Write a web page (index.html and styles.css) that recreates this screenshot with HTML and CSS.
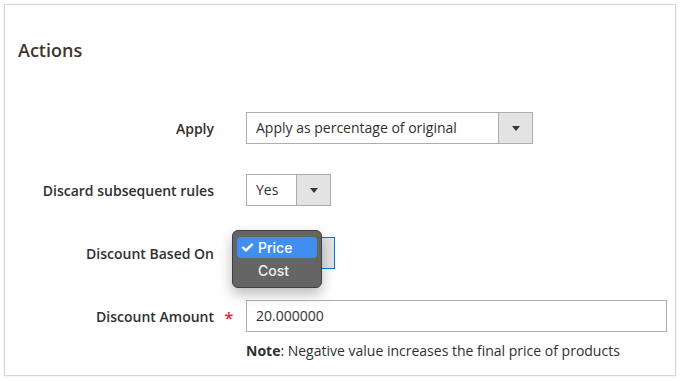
FILE: index.html
```html
<!DOCTYPE html>
<html>
<head>
<meta charset="utf-8">
<link rel="stylesheet" href="styles.css">
</head>
<body>
<div class="panel">
  <h2 class="title">Actions</h2>
  <div class="fields">
    <div class="row">
      <div class="label">Apply</div>
      <div class="mark"></div>
      <div class="control">
        <div class="select select-wide"><span class="value">Apply as percentage of original</span><span class="arrow"><i></i></span></div>
      </div>
    </div>
    <div class="row">
      <div class="label">Discard subsequent rules</div>
      <div class="mark"></div>
      <div class="control">
        <div class="select select-small"><span class="value">Yes</span><span class="arrow"><i></i></span></div>
      </div>
    </div>
    <div class="row">
      <div class="label">Discount Based On</div>
      <div class="mark"></div>
      <div class="control">
        <div class="select select-price focused"><span class="value">Price</span><span class="arrow"><i></i></span></div>
        <div class="popup">
          <div class="opt opt-active"><span class="check">✓</span><span>Price</span></div>
          <div class="opt"><span>Cost</span></div>
        </div>
      </div>
    </div>
    <div class="row">
      <div class="label">Discount Amount</div>
      <div class="mark"><span class="req">*</span></div>
      <div class="control">
        <div class="input">20.000000</div>
      </div>
    </div>
    <div class="note-row">
      <div class="note"><b>Note</b>: Negative value increases the final price of products</div>
    </div>
  </div>
</div>
</body>
</html>
```
FILE: styles.css
```css
html, body {
  margin: 0;
  padding: 0;
  background: #ffffff;
}
body {
  font-family: "Open Sans", "Noto Sans", sans-serif;
  color: #303030;
  font-size: 14px;
}
.panel {
  margin: 4px;
  width: 672px;
  height: 372px;
  box-sizing: border-box;
  border: 1px solid #d6d6d6;
  box-shadow: 0 0 2px rgba(0, 0, 0, 0.12);
  background: #fff;
}
.title {
  margin: 0;
  padding: 33px 0 0 13px;
  font-size: 18px;
  line-height: 24px;
  font-weight: 600;
  color: #41362f;
}
.fields {
  margin-top: 50px;
  display: flex;
  flex-direction: column;
  padding-right: 8px;
}
.row {
  display: grid;
  grid-template-columns: 209px 32px 1fr;
  align-items: center;
  height: 32px;
  margin-top: 31px;
}
.row:first-child {
  margin-top: 0;
}
.row:nth-child(2) {
  margin-top: 30px;
}
.label {
  text-align: right;
  font-weight: 600;
  font-size: 14px;
  color: #303030;
}
.mark {
  text-align: center;
}
.req {
  color: #e22626;
  font-size: 16px;
  font-weight: 600;
  position: relative;
  top: 2px;
  left: -1px;
}
.control {
  position: relative;
  height: 32px;
}
.select {
  box-sizing: border-box;
  height: 32px;
  border: 1px solid #adadad;
  background: #fff;
  display: flex;
  align-items: stretch;
}
.select .value {
  flex: 1;
  padding-left: 9px;
  line-height: 30px;
  color: #303030;
}
.select .arrow {
  width: 33px;
  background: #e3e3e3;
  border-left: 1px solid #adadad;
  display: flex;
  align-items: center;
  justify-content: center;
}
.select .arrow i {
  width: 0;
  height: 0;
  border-left: 4px solid transparent;
  border-right: 4px solid transparent;
  border-top: 5px solid #41362f;
  margin-top: 1px;
}
.select-wide { width: 287px; }
.select-small { width: 85px; }
.select-price { width: 89px; }
.focused {
  border-color: #007bdb;
}
.input {
  box-sizing: border-box;
  height: 32px;
  border: 1px solid #adadad;
  padding-left: 9px;
  line-height: 30px;
}
.popup {
  position: absolute;
  left: -14px;
  top: -7px;
  width: 90px;
  height: 58px;
  box-sizing: border-box;
  background: #656565;
  border: 1px solid #404040;
  border-radius: 6px;
  box-shadow: 0 6px 14px rgba(0, 0, 0, 0.28);
  padding: 6px 4px;
  font-family: "Inter", "Noto Sans", sans-serif;
  font-size: 14px;
  font-weight: 500;
  color: #f2f2f2;
}
.opt {
  height: 21px;
  line-height: 21px;
  padding-left: 21px;
  display: flex;
  align-items: center;
  border-radius: 4px;
  margin-bottom: 2px;
}
.opt-active {
  background: #3f8ef0;
  color: #fff;
  padding-left: 3px;
}
.check {
  width: 18px;
  font-size: 16px;
  font-weight: 700;
  line-height: 21px;
}
.note-row {
  margin-top: 9px;
  padding-left: 241px;
  line-height: 20px;
}
.note {
  font-size: 14px;
  color: #303030;
}
.note b {
  font-weight: 700;
}
```
